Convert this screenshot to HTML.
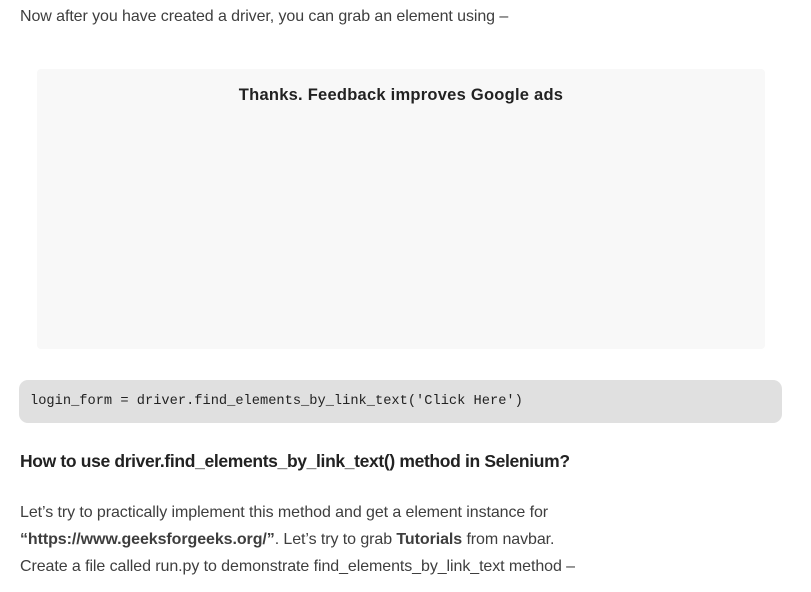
<!DOCTYPE html>
<html><head><meta charset="utf-8"><style>
body{margin:0;width:811px;height:592px;background:#fff;font-family:"Liberation Sans",sans-serif;color:#273239;overflow:hidden;position:relative}
.t{position:absolute;left:20px;font-size:16px;letter-spacing:-0.08px;color:#3e3e3e;white-space:nowrap}
.ad{position:absolute;left:37px;top:69px;width:728px;height:280px;background:#f8f8f8;border-radius:4px}
.ad div{text-align:center;margin-top:17px;font-weight:bold;font-size:16.5px;letter-spacing:0.25px;color:#222}
.code{position:absolute;left:19px;top:380px;width:763px;height:43px;background:#e0e0e0;border-radius:9px}
.code span{position:absolute;left:11px;top:14px;font-family:"Liberation Mono",monospace;font-size:13.7px;color:#222;white-space:pre}
h3{position:absolute;left:20px;top:451px;margin:0;font-size:17.5px;letter-spacing:-0.35px;color:#222}
</style></head><body>
<div class="t" style="top:8px">Now after you have created a driver, you can grab an element using –</div>
<div class="ad"><div>Thanks. Feedback improves Google ads</div></div>
<div class="code"><span>login_form = driver.find_elements_by_link_text('Click Here')</span></div>
<h3>How to use driver.find_elements_by_link_text() method in Selenium?</h3>
<div class="t" style="top:504px">Let’s try to practically implement this method and get a element instance for</div>
<div class="t" style="top:531px"><b>“https://www.geeksforgeeks.org/”</b>. Let’s try to grab <b>Tutorials</b> from navbar.</div>
<div class="t" style="top:558px">Create a file called run.py to demonstrate find_elements_by_link_text method –</div>
</body></html>
